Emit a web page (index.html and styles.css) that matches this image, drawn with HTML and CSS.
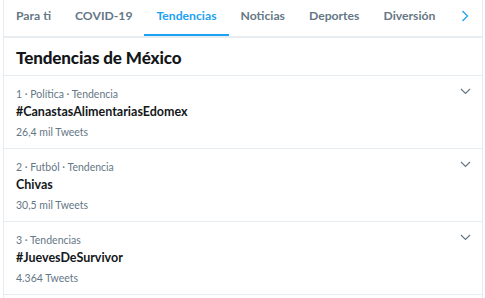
FILE: index.html
```html
<!DOCTYPE html>
<html lang="es">
<head>
  <meta charset="UTF-8" />
  <meta name="viewport" content="width=device-width, initial-scale=1.0"/>
  <title>Tendencias</title>
  <link rel="stylesheet" href="styles.css">
</head>
<body>

<div class="panel">
  <nav class="tabs">
    <a class="tab">Para ti</a>
    <a class="tab">COVID-19</a>
    <a class="tab active">Tendencias</a>
    <a class="tab">Noticias</a>
    <a class="tab">Deportes</a>
    <a class="tab">Diversión</a>
    <span class="tab-next">
      <svg width="8" height="12" viewBox="0 0 8 12"><path d="M1.5 1 L6.5 6 L1.5 11" fill="none" stroke="#1da1f2" stroke-width="1.3"/></svg>
    </span>
  </nav>

  <h1 class="title">Tendencias de México</h1>

  <div class="trend">
    <div class="meta">1 · Política · Tendencia</div>
    <div class="name">#CanastasAlimentariasEdomex</div>
    <div class="count">26,4 mil Tweets</div>
    <span class="caret"><svg width="11" height="7" viewBox="0 0 11 7"><path d="M1 1 L5.5 5.5 L10 1" fill="none" stroke="#657786" stroke-width="1.2"/></svg></span>
  </div>

  <div class="trend">
    <div class="meta">2 · Futból · Tendencia</div>
    <div class="name">Chivas</div>
    <div class="count">30,5 mil Tweets</div>
    <span class="caret"><svg width="11" height="7" viewBox="0 0 11 7"><path d="M1 1 L5.5 5.5 L10 1" fill="none" stroke="#657786" stroke-width="1.2"/></svg></span>
  </div>

  <div class="trend">
    <div class="meta">3 · Tendencias</div>
    <div class="name">#JuevesDeSurvivor</div>
    <div class="count">4.364 Tweets</div>
    <span class="caret"><svg width="11" height="7" viewBox="0 0 11 7"><path d="M1 1 L5.5 5.5 L10 1" fill="none" stroke="#657786" stroke-width="1.2"/></svg></span>
  </div>
</div>

</body>
</html>
```

FILE: styles.css
```css
* {
  box-sizing: border-box;
}
body {
  margin: 0;
  background: #fff;
  font-family: Lato, "Noto Sans", sans-serif;
  color: #14171a;
}
.panel {
  width: 480px;
  margin-left: 3px;
  border-left: 1px solid #e6ecf0;
  border-right: 1px solid #e6ecf0;
  height: 298px;
  overflow: hidden;
}
.tabs {
  display: flex;
  height: 38px;
  border-bottom: 2px solid #e6ecf0;
}
.tab {
  padding: 0 12px;
  height: 36px;
  line-height: 32px;
  font-size: 12.2px;
  font-weight: 700;
  color: #657786;
  white-space: nowrap;
  border-bottom: 2px solid transparent;
}
.tab.active {
  color: #1da1f2;
  border-bottom-color: #1da1f2;
}
.tab-next {
  margin-left: auto;
  width: 34px;
  display: flex;
  align-items: center;
  justify-content: center;
  padding-bottom: 4px;
}
.title {
  margin: 0;
  padding: 8px 12px 5px;
  font-size: 17px;
  line-height: 24px;
  font-weight: 900;
  letter-spacing: -0.1px;
  border-bottom: 1px solid #e6ecf0;
}
.trend {
  position: relative;
  padding: 10px 12px 8px;
  border-bottom: 1px solid #e6ecf0;
}
.meta, .count {
  font-size: 10.5px;
  line-height: 16px;
  color: #657786;
}
.name {
  font-size: 12.5px;
  line-height: 20px;
  font-weight: 700;
}
.count {
  margin-top: 2px;
}
.caret {
  position: absolute;
  top: 12px;
  right: 11px;
  display: flex;
}
```
